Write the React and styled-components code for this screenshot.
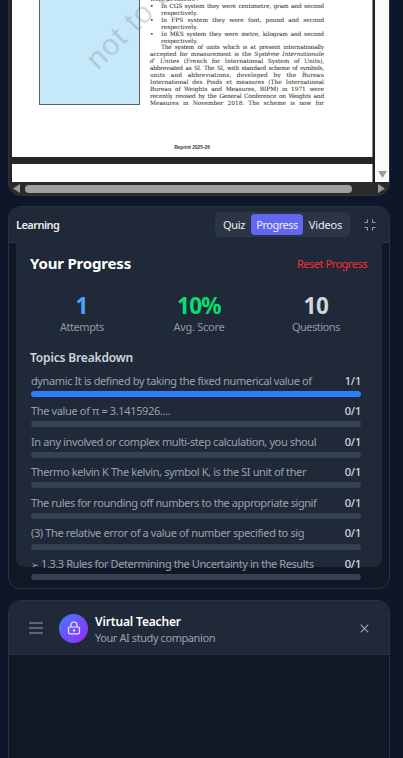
import React from 'react';
import styled, { createGlobalStyle } from 'styled-components';

const GlobalStyle = createGlobalStyle`
  * { box-sizing: border-box; }
  html, body { margin: 0; height: 100%; overflow: hidden; background: #0e172a; }
  body { font-family: "Noto Sans", "Open Sans", sans-serif; font-size: 11px; color: #e5e7eb; }
  button { font: inherit; border: 0; padding: 0; background: none; color: inherit; }
`;

const Page = styled.main`
  height: 758px;
  overflow: hidden;
  display: flex;
  flex-direction: column;
  align-items: flex-start;
  padding-left: 8px;
  background: #0e172a;
`;

const Label = styled.span`
  white-space: pre;
  letter-spacing: ${(p) => p.$track || 0}px;
`;

/* ---------- document viewer ---------- */

const Viewer = styled.section`
  width: 382px;
  height: 196px;
  flex: none;
  display: flex;
  flex-direction: column;
  overflow: hidden;
  border: 1px solid #2b3441;
  border-top: 0;
  border-radius: 0 0 14px 14px;
  background: #2b2b2b;
`;

const ViewerBody = styled.div`
  height: 182px;
  flex: none;
  display: flex;
`;

const Sheets = styled.div`
  width: 366px;
  padding-left: 3px;
  display: flex;
  flex-direction: column;
  background: #262626;
  border-right: 2px solid #1e1e1e;
`;

const Sheet = styled.div`
  height: 157px;
  flex: none;
  position: relative;
  display: flex;
  background: #fff;
  border-right: 1px solid #8c8c8c;
  overflow: hidden;
`;

const NextSheet = styled.div`
  height: 18px;
  margin-top: 7px;
  background: #fff;
  border-right: 1px solid #8c8c8c;
`;

const Figure = styled.div`
  width: 101px;
  height: 105px;
  margin-left: 27px;
  flex: none;
  background: #c6e9f9;
  border: 1px solid #56646c;
  border-top: 0;
`;

const Watermark = styled.span`
  position: absolute;
  left: 79px;
  top: 49px;
  font: 30px/30px "Liberation Sans", sans-serif;
  letter-spacing: 1px;
  color: rgba(90, 110, 125, 0.27);
  white-space: pre;
  transform: rotate(-45deg);
  transform-origin: 0 50%;
`;

const Column = styled.div`
  width: 174px;
  margin: -3.8px 0 0 10px;
  font-family: "DejaVu Serif", serif;
  font-size: 5.9px;
  line-height: 6.9px;
  color: #1c1c22;
`;

const TextLine = styled.div`
  height: 6.9px;
  display: flex;
  justify-content: ${(p) => (p.$ragged ? 'flex-start' : 'space-between')};
  gap: ${(p) => (p.$ragged ? '1.5px' : 0)};
  padding-left: ${(p) => p.$indent || 0}px;
  letter-spacing: ${(p) => (p.$track || 0) - 0.06}px;
  white-space: nowrap;
  position: relative;

  &::before {
    content: ${(p) => (p.$bullet ? '"•"' : 'none')};
    position: absolute;
    left: 0;
  }
`;

const Reprint = styled.div`
  position: absolute;
  left: 0;
  right: 0;
  top: 144px;
  text-align: center;
  font: 700 4.8px/7px "Liberation Sans", sans-serif;
  color: #333;
`;

const VerticalBar = styled.div`
  width: 14px;
  display: flex;
  align-items: flex-end;
  justify-content: center;
  padding-bottom: 4px;
  background: #fbfbfb;
`;

const HorizontalBar = styled.div`
  flex: 1;
  display: flex;
  align-items: center;
  padding: 0 4px;
`;

const Thumb = styled.div`
  width: 327px;
  height: 8px;
  margin: 0 auto 0 5px;
  border-radius: 4px;
  background: #9f9f9f;
`;

/* ---------- shared card ---------- */

const Card = styled.section`
  width: 382px;
  height: ${(p) => p.$height}px;
  margin-top: ${(p) => p.$gap}px;
  flex: none;
  display: flex;
  flex-direction: column;
  border: 1px solid #29323f;
  border-radius: 12px;
  background: #111725;
  overflow: hidden;
`;

const LearningHeader = styled.header`
  height: 36px;
  flex: none;
  display: flex;
  align-items: center;
  padding: 0 13px 0 7px;
  background: #1f2937;
  border-bottom: 1px solid #303947;
`;

const Title = styled.h2`
  margin: 0 auto 0 0;
  font-size: 11px;
  font-weight: 600;
  color: #e9ebee;
`;

const Tabs = styled.nav`
  height: 25px;
  display: flex;
  padding: 2px;
  border-radius: 5px;
  background: #2b3545;
`;

const Tab = styled.button`
  width: ${(p) => p.$width}px;
  border-radius: 4px;
  text-align: center;
  color: #eceef2;
  background: ${(p) => (p.$active ? '#6366f1' : 'transparent')};
`;

const IconButton = styled.button`
  display: flex;
  color: #9ca3af;
  margin-left: ${(p) => p.$before || 0}px;
`;

/* ---------- progress ---------- */

const Panel = styled.div`
  width: 366px;
  height: 325px;
  margin: -1px 0 0 7px;
  flex: none;
  padding: 10px 14px 0;
  border-radius: 0 0 8px 8px;
  background: #1f2937;
`;

const PanelTop = styled.div`
  height: 22px;
  display: flex;
  align-items: center;
  justify-content: space-between;
`;

const PanelTitle = styled.h3`
  margin: 0;
  font-size: 15px;
  font-weight: 700;
  color: #fff;
`;

const Reset = styled.button`
  margin-right: 1px;
  color: #fb2c36;
`;

const Stats = styled.div`
  display: grid;
  grid-template-columns: 103px 131px 103px;
  margin: 18px 0 0 0.4px;
`;

const Stat = styled.div`
  display: flex;
  flex-direction: column;
  align-items: center;
  color: #8f98a5;
  line-height: 13px;
`;

const StatValue = styled.strong`
  font-size: 22.5px;
  line-height: 28px;
  font-weight: 700;
  color: ${(p) => p.$color};
`;

const Subtitle = styled.h4`
  margin: 16px 0 5px;
  font-size: 12px;
  line-height: 18px;
  font-weight: 600;
  color: #d1d5dc;
`;

const Topic = styled.div`
  width: 330px;
  height: 30.6px;
  margin-left: 1px;
`;

const TopicRow = styled.div`
  height: 16px;
  display: flex;
  align-items: center;
  justify-content: space-between;
  color: #99a1af;
`;

const Score = styled.span`
  font-weight: 500;
  letter-spacing: -0.2px;
  color: #d9dce1;
`;

const Track = styled.div`
  height: 6px;
  margin-top: 2.7px;
  border-radius: 3px;
  background: ${(p) => (p.$done ? '#2b7fff' : '#364153')};
`;

/* ---------- teacher ---------- */

const TeacherHeader = styled.header`
  height: 54px;
  flex: none;
  display: flex;
  align-items: center;
  padding: 1px 20px 0 20px;
  background: #1f2937;
  border-bottom: 1px solid #29323f;
`;

const Avatar = styled.div`
  width: 29px;
  height: 29px;
  margin: 0 7px 0 16px;
  border-radius: 50%;
  display: grid;
  place-items: center;
  background: linear-gradient(135deg, #3f7cff, #9a28fa);
`;

const Names = styled.div`
  margin-right: auto;
  padding-top: 2px;
  display: flex;
  flex-direction: column;
  line-height: 15px;
  color: #99a1af;
`;

const Name = styled.strong`
  font-size: 12px;
  line-height: 16px;
  font-weight: 600;
  color: #fff;
`;

const documentLines = [
  { text: 'were as follows :', ragged: true },
  { text: 'In CGS system they were centimetre, gram and second', bullet: true, indent: 11, track: -0.12 },
  { text: 'respectively.', ragged: true, indent: 11 },
  { text: 'In FPS system they were foot, pound and second', bullet: true, indent: 11 },
  { text: 'respectively.', ragged: true, indent: 11 },
  { text: 'In MKS system they were metre, kilogram and second', bullet: true, indent: 11, track: -0.12 },
  { text: 'respectively.', ragged: true, indent: 11 },
  { text: 'The system of units which is at present internationally', indent: 11, track: -0.16 },
  { text: 'accepted for measurement is the *Système *Internationale' },
  { text: "*d' *Unites (French for International System of Units)," },
  { text: 'abbreviated as SI. The SI, with standard scheme of symbols,', track: -0.2 },
  { text: 'units and abbreviations, developed by the Bureau', track: 0.12 },
  { text: 'International des Poids et measures (The International' },
  { text: 'Bureau of Weights and Measures, BIPM) in 1971 were' },
  { text: 'recently revised by the General Conference on Weights and', track: -0.16 },
  { text: 'Measures in November 2018. The scheme is now for' },
];

const topics = [
  ['dynamic It is defined by taking the fixed numerical value of', -0.39, true],
  ['The value of π = 3.1415926....', -0.36],
  ['In any involved or complex multi-step calculation, you shoul', -0.39],
  ['Thermo kelvin K The kelvin, symbol K, is the SI unit of ther', -0.39],
  ['The rules for rounding off numbers to the appropriate signif', -0.43],
  ['(3) The relative error of a value of number specified to sig', -0.37],
  ['➢ 1.3.3 Rules for Determining the Uncertainty in the Results', -0.42],
];

const Marker = styled.span`
  display: inline-block;
  width: 7.6px;
  font-size: 9px;
  line-height: 9px;
`;

const Arrow = ({ points, width, height }) => (
  <svg width={width} height={height} viewBox={`0 0 ${width} ${height}`}>
    <polygon points={points} fill="#9a9a9a" />
  </svg>
);

const words = (text) =>
  text.split(' ').map((word, i) =>
    word[0] === '*' ? <i key={i}>{word.slice(1)}</i> : <span key={i}>{word}</span>
  );

export default function App() {
  return (
    <Page>
      <GlobalStyle />
      <Viewer>
        <ViewerBody>
          <Sheets>
            <Sheet>
              <Figure />
              <Column>
                {documentLines.map((l, i) => (
                  <TextLine key={i} $ragged={l.ragged} $bullet={l.bullet} $indent={l.indent} $track={l.track}>
                    {words(l.text)}
                  </TextLine>
                ))}
              </Column>
              <Watermark>not to be</Watermark>
              <Reprint>Reprint 2025-26</Reprint>
            </Sheet>
            <NextSheet />
          </Sheets>
          <VerticalBar>
            <Arrow width={9} height={7} points="0,0 9,0 4.5,7" />
          </VerticalBar>
        </ViewerBody>
        <HorizontalBar>
          <Arrow width={7} height={9} points="7,0 7,9 0,4.5" />
          <Thumb />
          <Arrow width={7} height={9} points="0,0 7,4.5 0,9" />
        </HorizontalBar>
      </Viewer>

      <Card $height={383} $gap={10}>
        <LearningHeader>
          <Title><Label $track={-0.55}>Learning</Label></Title>
          <Tabs>
            <Tab $width={34}><Label $track={-0.35}>Quiz</Label></Tab>
            <Tab $width={52} $active><Label $track={-0.5}>Progress</Label></Tab>
            <Tab $width={45}><Label $track={-0.15}>Videos</Label></Tab>
          </Tabs>
          <IconButton $before={14} aria-label="Collapse">
            <svg width="12" height="12" viewBox="0 0 12 12" fill="none" stroke="currentColor" strokeWidth="1">
              <path d="M0.5 3.5H3.5V0.5M11.5 3.5H8.5V0.5M0.5 8.5H3.5V11.5M11.5 8.5H8.5V11.5" />
            </svg>
          </IconButton>
        </LearningHeader>
        <Panel>
          <PanelTop>
            <PanelTitle><Label $track={-0.18}>Your Progress</Label></PanelTitle>
            <Reset><Label $track={-0.48}>Reset Progress</Label></Reset>
          </PanelTop>
          <Stats>
            <Stat><StatValue $color="#51a2ff">1</StatValue><Label $track={-0.44}>Attempts</Label></Stat>
            <Stat><StatValue $color="#05df72"><Label $track={-0.8}>10%</Label></StatValue><Label $track={-0.27}>Avg. Score</Label></Stat>
            <Stat><StatValue $color="#d1d5dc"><Label $track={-0.5}>10</Label></StatValue><Label $track={-0.49}>Questions</Label></Stat>
          </Stats>
          <Subtitle><Label $track={-0.16}>Topics Breakdown</Label></Subtitle>
          {topics.map(([text, track, done]) => (
            <Topic key={text}>
              <TopicRow>
                <Label $track={track}>
                  {text[0] === '➢' && <Marker>➢</Marker>}
                  {text.replace('➢', '')}
                </Label>
                <Score>{done ? '1/1' : '0/1'}</Score>
              </TopicRow>
              <Track $done={done} />
            </Topic>
          ))}
        </Panel>
      </Card>

      <Card $height={400} $gap={11}>
        <TeacherHeader>
          <IconButton aria-label="Menu">
            <svg width="14" height="12" viewBox="0 0 14 12" stroke="currentColor" strokeWidth="1.2">
              <path d="M0 1H14M0 6H14M0 11H14" />
            </svg>
          </IconButton>
          <Avatar>
            <svg width="14" height="14" viewBox="0 0 14 14" fill="none" stroke="#f0e8ff" strokeWidth="1.2">
              <rect x="1.5" y="6" width="11" height="6.8" rx="1.2" />
              <path d="M4 6V4a3 3 0 0 1 6 0v2" />
              <circle cx="7" cy="9.4" r="0.6" />
            </svg>
          </Avatar>
          <Names>
            <Name><Label $track={-0.15}>Virtual Teacher</Label></Name>
            <Label $track={-0.42}>Your AI study companion</Label>
          </Names>
          <IconButton aria-label="Close">
            <svg width="9" height="9" viewBox="0 0 9 9" stroke="currentColor" strokeWidth="1.2">
              <path d="M0.7 0.7L8.3 8.3M8.3 0.7L0.7 8.3" />
            </svg>
          </IconButton>
        </TeacherHeader>
      </Card>
    </Page>
  );
}
